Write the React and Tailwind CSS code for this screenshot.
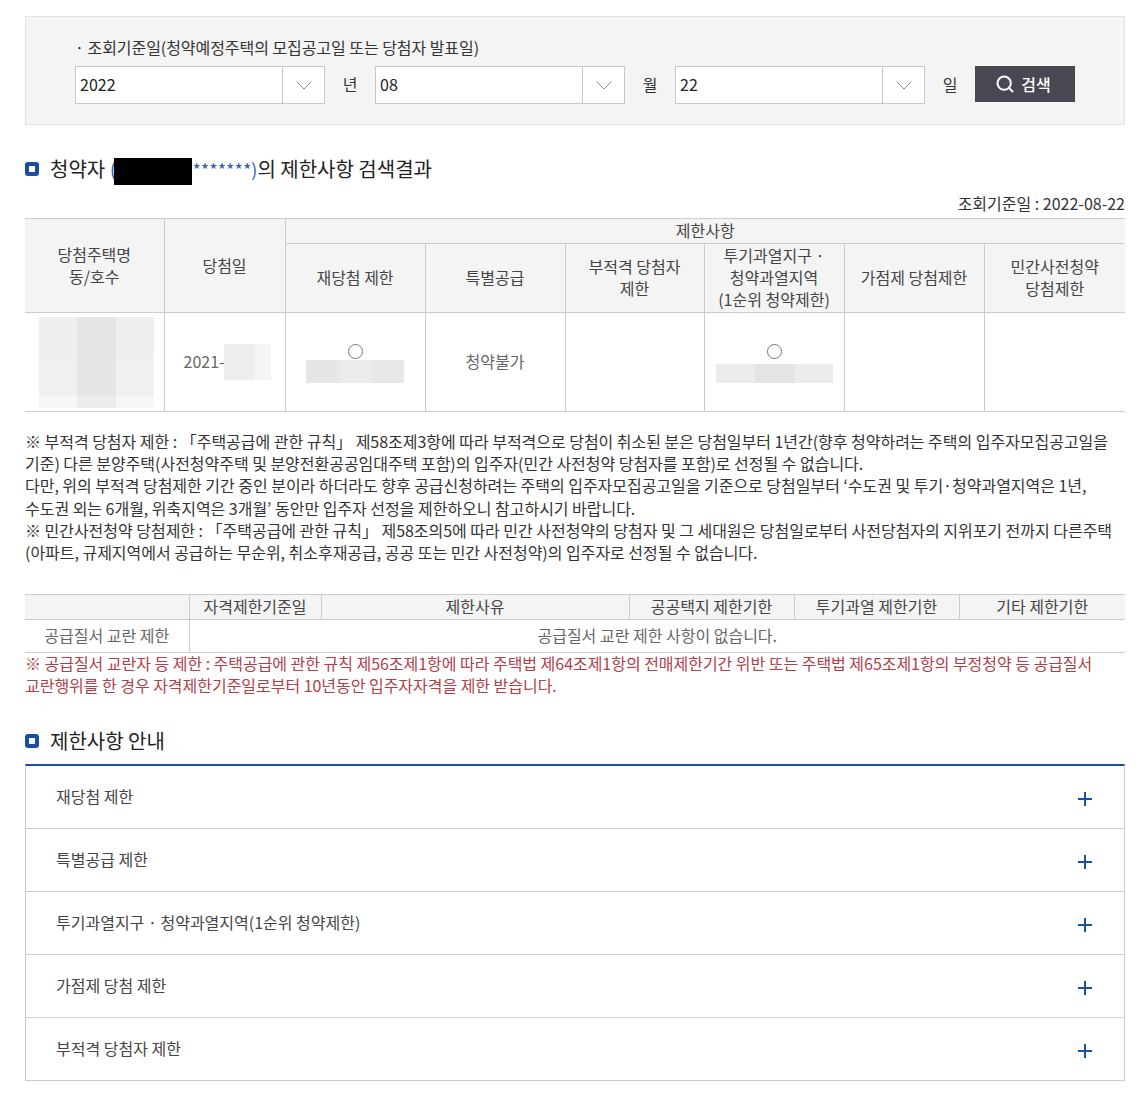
import { Search } from 'lucide-react';

const font = 'font-["Noto_Sans_CJK_KR","Noto_Sans",sans-serif]';

const DateSelect = ({ value }) => (
  <div className="flex w-[250px] h-[38px] border border-[#c8c8c8] bg-white">
    <div className="flex-1 pl-[4px] text-[16px] leading-[35px] text-[#222]">{value}</div>
    <div className="w-[42px] border-l border-[#c8c8c8] flex items-center justify-center">
      <svg width="16" height="9" viewBox="0 0 16 9" fill="none" stroke="#8a8a8a" strokeWidth="1">
        <path d="M0.5 0.5L8 8L15.5 0.5" />
      </svg>
    </div>
  </div>
);

const SectionTitle = ({ children }) => (
  <div className="flex items-center h-[24px] text-[20px] text-[#222]">
    <span className="w-[14px] h-[14px] rounded-[3px] border-[4px] border-[#1a4ea2] bg-white mr-[11px] shrink-0" />
    {children}
  </div>
);

// blurred-out cell content
const Mosaic = ({ className, cols }) => (
  <div className={`flex ${className}`}>
    {cols.map((c, i) => (
      <div key={i} className={`flex-1 ${c}`} />
    ))}
  </div>
);

const Circle = () => (
  <div className="w-[15px] h-[15px] rounded-full border border-[#777] mx-auto" />
);

const Th = ({ children, className = '', ...rest }) => (
  <th {...rest} className={`border border-[#ccc] bg-[#f4f4f4] font-normal text-[16px] leading-[22px] text-[#444] p-0 pb-[2px] ${className}`}>
    {children}
  </th>
);

const Td = ({ children, className = '', ...rest }) => (
  <td {...rest} className={`border border-[#ccc] text-[16px] text-center text-[#666] p-0 ${className}`}>
    {children}
  </td>
);

const guides = [
  '재당첨 제한',
  '특별공급 제한',
  '투기과열지구 · 청약과열지역(1순위 청약제한)',
  '가점제 당첨 제한',
  '부적격 당첨자 제한',
];

export default function App() {
  return (
    <div className={`${font} bg-white w-[1142px] h-[1097px] pl-[25px] pt-[16px] overflow-hidden`}>
      <div className="w-[1100px]">
        {/* Search box */}
        <div className="h-[109px] bg-[#f4f4f4] border border-[#e2e2e2] pl-[49px] pt-[18px]">
          <div className="text-[16px] leading-[24px] text-[#333] tracking-[-0.05px] mb-[7px]">· 조회기준일(청약예정주택의 모집공고일 또는 당첨자 발표일)</div>
          <div className="flex items-start">
            <DateSelect value="2022" />
            <div className="w-[50px] text-center text-[16px] leading-[36px] text-[#333]">년</div>
            <DateSelect value="08" />
            <div className="w-[50px] text-center text-[16px] leading-[36px] text-[#333]">월</div>
            <DateSelect value="22" />
            <div className="w-[50px] text-center text-[16px] leading-[36px] text-[#333]">일</div>
            <button className="w-[100px] h-[36px] pr-[4px] bg-[#484852] text-white text-[16px] font-medium flex items-center justify-center gap-[6px]">
              <Search size={20} strokeWidth={2.4} />
              검색
            </button>
          </div>
        </div>

        {/* Result title */}
        <div className="mt-[32px]">
          <SectionTitle>
            청약자&nbsp;
            <span className="text-[#2f5fae]">(</span>
            <span className="w-[78px] h-[27px] mt-[4px] -ml-[2px] bg-black" />
            <span className="text-[#2f5fae] text-[18px]">*******)</span>
            의 제한사항 검색결과
          </SectionTitle>
        </div>
        <div className="mt-[11px] h-[24px] text-right text-[16px] leading-[22px] text-[#333]">조회기준일 : 2022-08-22</div>

        {/* Result table */}
        <table className="mt-[2px] w-[1100px] table-fixed border-collapse [&_th:first-child]:border-l-0 [&_td:first-child]:border-l-0 [&_th:last-child]:border-r-0 [&_td:last-child]:border-r-0">
          <colgroup>
            <col className="w-[139px]" />
            <col className="w-[121px]" />
            <col className="w-[140px]" />
            <col className="w-[140px]" />
            <col className="w-[139px]" />
            <col className="w-[140px]" />
            <col className="w-[140px]" />
            <col className="w-[141px]" />
          </colgroup>
          <thead>
            <tr className="h-[25px]">
              <Th rowSpan={2}>당첨주택명<br />동/호수</Th>
              <Th rowSpan={2}>당첨일</Th>
              <Th colSpan={6}>제한사항</Th>
            </tr>
            <tr className="h-[69px]">
              <Th>재당첨 제한</Th>
              <Th>특별공급</Th>
              <Th>부적격 당첨자<br />제한</Th>
              <Th>투기과열지구 ·<br />청약과열지역<br />(1순위 청약제한)</Th>
              <Th>가점제 당첨제한</Th>
              <Th className="!border-r-0">민간사전청약<br />당첨제한</Th>
            </tr>
          </thead>
          <tbody>
            <tr className="h-[99px]">
              <Td>
                <div className="w-[115px] h-[91px] ml-[14px] flex flex-col">
                  <Mosaic className="h-[43px]" cols={['bg-[#efefef]', 'bg-[#e5e5e5]', 'bg-[#eeeeee]']} />
                  <Mosaic className="h-[44px]" cols={['bg-[#f0f0f0]', 'bg-[#e6e6e6]', 'bg-[#f0f0f0]']} />
                  <Mosaic className="h-[12px]" cols={['bg-[#f6f6f6]', 'bg-[#ececec]', 'bg-[#f6f6f6]']} />
                </div>
              </Td>
              <Td>
                <div className="flex items-center pl-[19px]">
                  <span className="-mt-[2px]">2021-</span>
                  <Mosaic className="w-[47px] h-[36px] -ml-[1px]" cols={['bg-[#eeeeee]', 'bg-[#eeeeee]', 'bg-[#f5f5f5]']} />
                </div>
              </Td>
              <Td>
                <div className="pt-[2px]">
                  <Circle />
                  <Mosaic className="w-[98px] h-[23px] mx-auto mt-[1px]" cols={['bg-[#e6e6e6]', 'bg-[#ebebeb]', 'bg-[#e8e8ea]']} />
                </div>
              </Td>
              <Td className="pb-[2px]">청약불가</Td>
              <Td />
              <Td>
                <div className="pt-[2px]">
                  <Circle />
                  <Mosaic className="w-[117px] h-[19px] mx-auto mt-[5px]" cols={['bg-[#ececec]', 'bg-[#e4e4e4]', 'bg-[#ececec]']} />
                </div>
              </Td>
              <Td />
              <Td />
            </tr>
          </tbody>
        </table>

        {/* Notes */}
        <div className="mt-[18px] text-[16px] leading-[22.2px] text-[#333] tracking-[-0.025px] whitespace-nowrap">
          <div>※ 부적격 당첨자 제한 : 「주택공급에 관한 규칙」 제58조제3항에 따라 부적격으로 당첨이 취소된 분은 당첨일부터 1년간(향후 청약하려는 주택의 입주자모집공고일을</div>
          <div>기준) 다른 분양주택(사전청약주택 및 분양전환공공임대주택 포함)의 입주자(민간 사전청약 당첨자를 포함)로 선정될 수 없습니다.</div>
          <div>다만, 위의 부적격 당첨제한 기간 중인 분이라 하더라도 향후 공급신청하려는 주택의 입주자모집공고일을 기준으로 당첨일부터 ‘수도권 및 투기·청약과열지역은 1년,</div>
          <div>수도권 외는 6개월, 위축지역은 3개월’ 동안만 입주자 선정을 제한하오니 참고하시기 바랍니다.</div>
          <div>※ 민간사전청약 당첨제한 : 「주택공급에 관한 규칙」 제58조의5에 따라 민간 사전청약의 당첨자 및 그 세대원은 당첨일로부터 사전당첨자의 지위포기 전까지 다른주택</div>
          <div>(아파트, 규제지역에서 공급하는 무순위, 취소후재공급, 공공 또는 민간 사전청약)의 입주자로 선정될 수 없습니다.</div>
        </div>

        {/* Supply order table */}
        <table className="mt-[31px] w-[1100px] table-fixed border-collapse [&_th:first-child]:border-l-0 [&_td:first-child]:border-l-0 [&_th:last-child]:border-r-0 [&_td:last-child]:border-r-0">
          <colgroup>
            <col className="w-[164px]" />
            <col className="w-[132px]" />
            <col className="w-[308px]" />
            <col className="w-[165px]" />
            <col className="w-[165px]" />
            <col className="w-[166px]" />
          </colgroup>
          <thead>
            <tr className="h-[25px]">
              <Th />
              <Th>자격제한기준일</Th>
              <Th>제한사유</Th>
              <Th>공공택지 제한기한</Th>
              <Th>투기과열 제한기한</Th>
              <Th>기타 제한기한</Th>
            </tr>
          </thead>
          <tbody>
            <tr className="h-[33px]">
              <Td className="pb-[2px]">공급질서 교란 제한</Td>
              <Td className="pb-[2px]" colSpan={5}>공급질서 교란 제한 사항이 없습니다.</Td>
            </tr>
          </tbody>
        </table>
        <div className="-mt-[1px] text-[16px] leading-[22px] text-[#b04048] tracking-[-0.03px] whitespace-nowrap">
          <div>※ 공급질서 교란자 등 제한 : 주택공급에 관한 규칙 제56조제1항에 따라 주택법 제64조제1항의 전매제한기간 위반 또는 주택법 제65조제1항의 부정청약 등 공급질서</div>
          <div>교란행위를 한 경우 자격제한기준일로부터 10년동안 입주자자격을 제한 받습니다.</div>
        </div>

        {/* Guide */}
        <div className="mt-[33px]">
          <SectionTitle>제한사항 안내</SectionTitle>
        </div>
        <div className="mt-[11px] border-t-2 border-[#1a4ea2] border-x border-x-[#ccc]">
          {guides.map((g) => (
            <div key={g} className="h-[63px] border-b border-[#ccc] flex items-center pl-[30px] pr-[32px] text-[16px] text-[#444]">
              <span className="flex-1 -mt-[3px]">{g}</span>
              <svg width="14" height="14" viewBox="0 0 14 14" stroke="#1a4ea2" strokeWidth="2" className="mt-[3px]">
                <path d="M0 7H14M7 0V14" />
              </svg>
            </div>
          ))}
        </div>
      </div>
    </div>
  );
}
